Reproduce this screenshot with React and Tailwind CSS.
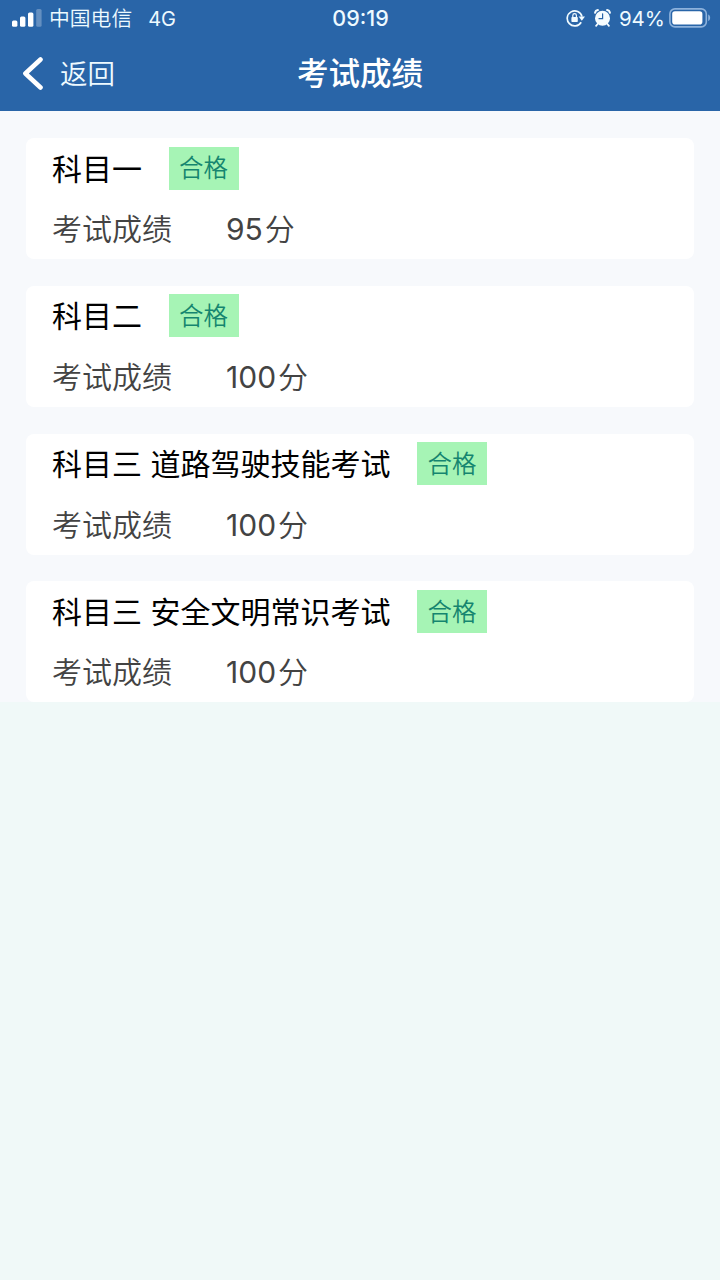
const results = [
  { id: 1, title: "科目一", status: "合格", score: "95" },
  { id: 2, title: "科目二", status: "合格", score: "100" },
  { id: 3, title: "科目三 道路驾驶技能考试", status: "合格", score: "100" },
  { id: 4, title: "科目三 安全文明常识考试", status: "合格", score: "100" },
];

const SignalIcon = () => (
  <svg width="30" height="18" viewBox="0 0 30 18" fill="#fff">
    <rect x="0" y="11.5" width="5.4" height="6.3" rx="1.5" />
    <rect x="8" y="7.6" width="5.4" height="10.2" rx="1.5" />
    <rect x="16" y="3.5" width="5.4" height="14.3" rx="1.5" />
    <rect x="24.2" y="0" width="5.4" height="17.8" rx="1.5" opacity="0.28" />
  </svg>
);

const RotationLockIcon = () => (
  <svg width="20" height="18" viewBox="0 0 20 18" fill="none" stroke="#f0fbff">
    <path d="M15.2 13.2A7.5 7.5 0 1 1 16 7.6" strokeWidth="1.7" />
    <path d="M12.6 7.6h6.4l-3.2 4.2z" fill="#f0fbff" stroke="none" />
    <rect x="5.4" y="8" width="6.4" height="5" rx="0.8" fill="#f0fbff" stroke="none" />
    <path d="M6.8 8.6V6.4a1.8 1.8 0 0 1 3.6 0v2.2" strokeWidth="1.2" />
  </svg>
);

const AlarmIcon = () => (
  <svg width="17" height="18" viewBox="0 0 17 18" fill="none" stroke="#f5fcff" strokeLinecap="round">
    <circle cx="8.5" cy="9.3" r="7.5" fill="#f5fcff" stroke="none" />
    <path d="M1.1 3.8A3.4 3.4 0 0 1 3.9 1.1M15.9 3.8A3.4 3.4 0 0 0 13.1 1.1" strokeWidth="2" />
    <path d="M3.6 15l-1.5 1.8M13.4 15l1.5 1.8" strokeWidth="1.8" />
    <path d="M8.6 4.8v4.9H5" stroke="#2965a8" strokeWidth="1.2" />
  </svg>
);

const BatteryIcon = () => (
  <svg width="42" height="20" viewBox="0 0 42 20">
    <rect x="0.9" y="0.9" width="36.4" height="18" rx="5" fill="none" stroke="#8db2dc" strokeWidth="1.6" />
    <rect x="3.2" y="3.2" width="30.2" height="13.4" rx="2.8" fill="#fff" />
    <path d="M39.2 6.5c2.6 1 2.6 5.6 0 6.6z" fill="#8db2dc" />
  </svg>
);

const StatusBar = () => {
  return (
    <div className="grid h-9 grid-cols-3 items-center pl-3 pr-[9px] text-[#eefaff]">
      <div className="flex items-center text-[20.8px] leading-none">
        <SignalIcon />
        <span className="ml-[7px] pt-0.5 font-[350]">中国电信</span>
        <span className="ml-[16px] pt-0.5 text-[20px]">4G</span>
      </div>
      <div className="pr-0.5 pt-0.5 text-center text-[21.5px] font-medium leading-none">09:19</div>
      <div className="flex items-center justify-end">
        <RotationLockIcon />
        <span className="ml-2">
          <AlarmIcon />
        </span>
        <span className="ml-2 mr-1 pt-0.5 text-[20.5px] leading-none">94%</span>
        <BatteryIcon />
      </div>
    </div>
  );
};

const NavBar = () => {
  return (
    <div className="grid h-[75px] grid-cols-3 items-center text-white">
      <button className="flex items-center pl-[22px]">
        <svg width="22" height="34" viewBox="0 0 22 34" fill="none" stroke="#fff" strokeWidth="4.6" strokeLinecap="round" strokeLinejoin="round">
          <path d="M18.5 2.5L3.4 16.5l15.1 14" />
        </svg>
        <span className="ml-4 pt-[3px] text-[27.5px] font-[350] leading-none text-[#eefaff]">返回</span>
      </button>
      <h1 className="text-center text-[31.5px] font-medium leading-none">考试成绩</h1>
    </div>
  );
};

const ResultCard = ({ result }) => {
  return (
    <div className="h-[121px] rounded-lg bg-white pl-[26px] pt-[8.5px]">
      <div className="flex items-center">
        <h2 className="pt-px text-[30px] leading-none text-black">{result.title}</h2>
        <span className="ml-[27px] flex h-[43px] w-[70px] items-center justify-center bg-[#a6f4b5] pr-px pt-px text-[24.5px] font-[350] leading-none text-[#15856f]">
          {result.status}
        </span>
      </div>
      <div className="mt-[24.5px] flex items-center text-[30px] leading-none text-[#434343]">
        <span className="w-[174px] font-[350]">考试成绩</span>
        <span>{result.score}</span>
        <span className="ml-0.5 font-[350]">分</span>
      </div>
    </div>
  );
};

const App = () => {
  return (
    <div className="min-h-screen bg-[#f0f9f8] font-[Inter,'Noto_Sans_CJK_SC',sans-serif]">
      <header className="h-[111px] bg-[#2965a8]">
        <StatusBar />
        <NavBar />
      </header>
      <main className="flex flex-col gap-[26.8px] bg-[#f7f9fc] px-[26px] pt-[27px]">
        {results.map((result) => (
          <ResultCard key={result.id} result={result} />
        ))}
      </main>
    </div>
  );
};

export default App;
